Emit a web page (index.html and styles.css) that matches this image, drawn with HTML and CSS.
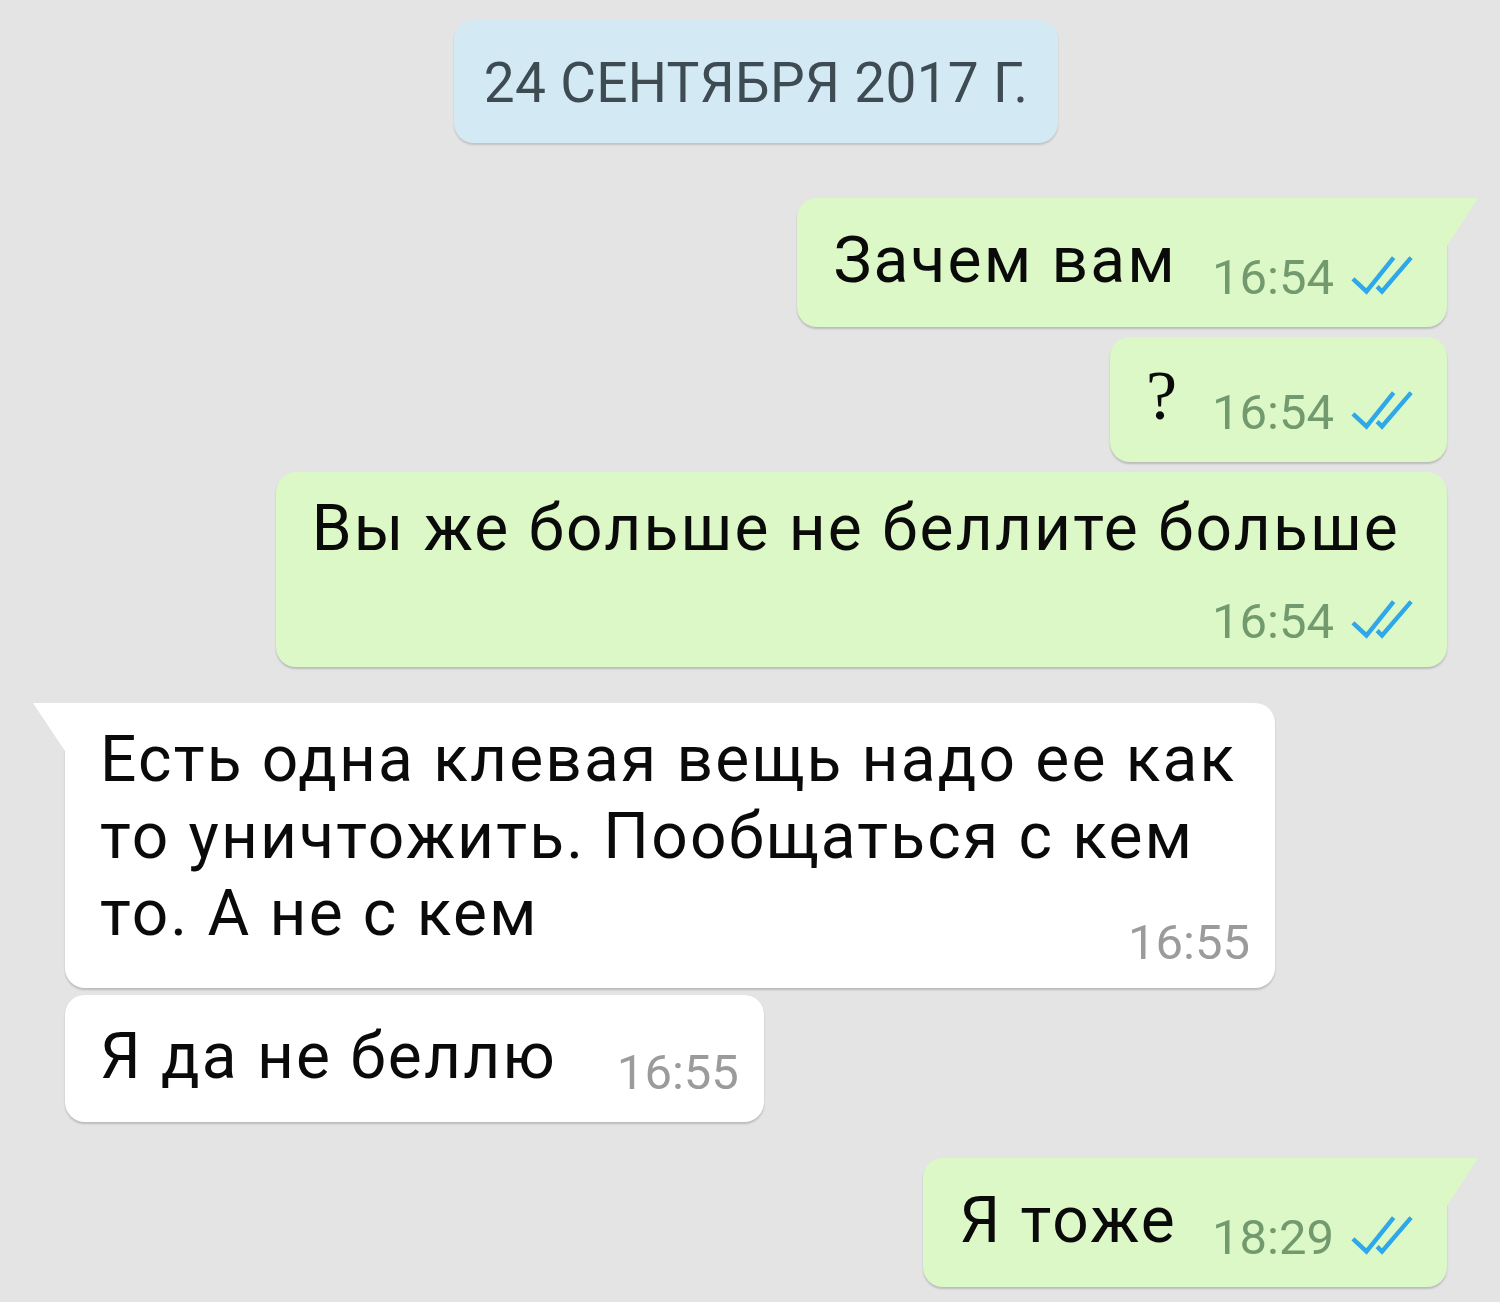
FILE: index.html
```html
<!DOCTYPE html>
<html lang="ru">
<head>
  <meta charset="UTF-8" />
  <meta name="viewport" content="width=device-width, initial-scale=1.0"/>
  <title>Чат</title>
  <link rel="stylesheet" href="styles.css">
</head>
<body>
  <div class="chat">
    <div class="date">24 СЕНТЯБРЯ 2017 Г.</div>

    <div class="msg out tail first">
      <span class="text">Зачем вам</span>
      <span class="meta">16:54
        <svg class="ticks" viewBox="0 0 64 40"><path d="M2 24 L16 37 L44 2"/><path d="M27 32 L32 37 L62 2"/></svg>
      </span>
    </div>

    <div class="msg out ask">
      <span class="text q">?</span>
      <span class="meta">16:54
        <svg class="ticks" viewBox="0 0 64 40"><path d="M2 24 L16 37 L44 2"/><path d="M27 32 L32 37 L62 2"/></svg>
      </span>
    </div>

    <div class="msg out stack">
      <span class="text">Вы же больше не беллите больше</span>
      <span class="meta">16:54
        <svg class="ticks" viewBox="0 0 64 40"><path d="M2 24 L16 37 L44 2"/><path d="M27 32 L32 37 L62 2"/></svg>
      </span>
    </div>

    <div class="msg in tail first long">
      <p class="text">Есть одна клевая вещь надо ее как<br>то уничтожить. Пообщаться с кем<br>то. А не с кем<span class="meta">16:55</span></p>
    </div>

    <div class="msg in">
      <span class="text">Я да не беллю</span>
      <span class="meta">16:55</span>
    </div>

    <div class="msg out tail first">
      <span class="text">Я тоже</span>
      <span class="meta">18:29
        <svg class="ticks" viewBox="0 0 64 40"><path d="M2 24 L16 37 L44 2"/><path d="M27 32 L32 37 L62 2"/></svg>
      </span>
    </div>
  </div>
</body>
</html>
```

FILE: styles.css
```css
body {
  margin: 0;
  background: #e4e4e4;
  font-family: Roboto, "Noto Sans", sans-serif;
}
.chat {
  display: flex;
  flex-direction: column;
  padding: 20px 53px 15px 65px;
}
.date {
  align-self: center;
  background: #d3eaf5;
  color: #3e4b52;
  font-size: 55px;
  line-height: 63px;
  letter-spacing: 0.3px;
  padding: 32px 30px 28px 30px;
  border-radius: 20px;
  box-shadow: 0 2px 2px rgba(0, 0, 0, 0.15);
  margin-bottom: 55px;
}
.msg {
  position: relative;
  display: flex;
  align-items: flex-end;
  border-radius: 20px;
  box-shadow: 0 2px 2px rgba(0, 0, 0, 0.18);
  padding: 24px 34px 28px 36px;
  margin-top: 10px;
  color: #0a0a0a;
  font-size: 64px;
  line-height: 77px;
  letter-spacing: 2.2px;
}
.msg.first {
  margin-top: 36px;
}
.date + .msg.first {
  margin-top: 0;
}
.out {
  align-self: flex-end;
  background: #dcf8c6;
}
.in {
  align-self: flex-start;
  background: #fff;
  padding: 23px 25px 27px 35px;
  margin-top: 7px;
}
.meta {
  display: flex;
  margin-left: 35px;
  margin-bottom: -9px;
  font-size: 49px;
  line-height: 60px;
  letter-spacing: 0;
  color: #729a6e;
  white-space: nowrap;
}
.in .meta {
  color: #9b9b9b;
  margin-left: 60px;
  margin-bottom: -8px;
}
.ticks {
  align-self: flex-start;
  width: 62px;
  height: 40px;
  margin: 7px 0 0 17px;
  fill: none;
  stroke: #2ea8e8;
  stroke-width: 4.5;
}

/* "?" bubble */
.text.q {
  font-family: "Liberation Serif", serif;
  font-size: 70px;
  line-height: 76px;
  letter-spacing: 0;
  margin-top: -3px;
}

/* time on its own row */
.stack {
  flex-direction: column;
  padding: 18px 47px 15px 36px;
}
.stack .meta {
  align-self: flex-end;
  margin: 25px -13px 0 0;
}

/* long incoming message: time floats at the end of the last line */
.long {
  display: block;
  width: 1150px;
  padding-top: 18px;
  padding-bottom: 15px;
}
.long .text {
  display: flow-root;
  margin: 0;
}
.long .meta {
  float: right;
  margin: 38px 0 0 60px;
}

/* bubble tails */
.out.tail {
  border-top-right-radius: 0;
}
.out.tail::after {
  content: "";
  position: absolute;
  top: 0;
  right: -31px;
  border-top: 48px solid #dcf8c6;
  border-right: 31px solid transparent;
}
.in.tail {
  border-top-left-radius: 0;
}
.in.tail::after {
  content: "";
  position: absolute;
  top: 0;
  left: -32px;
  border-top: 48px solid #fff;
  border-left: 32px solid transparent;
}
```
